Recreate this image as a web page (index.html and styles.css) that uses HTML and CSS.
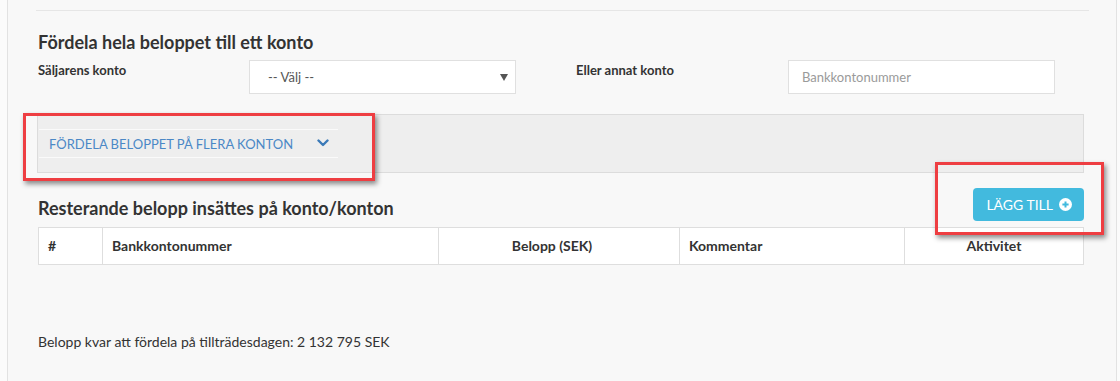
FILE: index.html
```html
<!DOCTYPE html>
<html lang="sv">
<head>
<meta charset="utf-8">
<title>Fördela belopp</title>
<link rel="stylesheet" href="styles.css">
</head>
<body>
<div class="panel">
  <div class="rule"></div>
  <h3 class="title">Fördela hela beloppet till ett konto</h3>
  <div class="form-row">
    <label class="lbl">Säljarens konto</label>
    <div class="select"><span>-- Välj --</span><span class="caret"></span></div>
    <div class="spacer"></div>
    <label class="lbl">Eller annat konto</label>
    <div class="input"><span class="ph">Bankkontonummer</span></div>
  </div>

  <div class="well">
    <div class="collapse-head">
      <span class="collapse-text">FÖRDELA BELOPPET PÅ FLERA KONTON</span>
      <svg class="chev" width="12" height="8" viewBox="0 0 12 8"><path d="M1.5 1.5 L6 6 L10.5 1.5" fill="none" stroke="#3b7ab8" stroke-width="2.4" stroke-linecap="round" stroke-linejoin="round"/></svg>
    </div>
    <div class="mark mark-well"></div>
  </div>

  <div class="split-row">
    <h3 class="title title2">Resterande belopp insättes på konto/konton</h3>
    <div class="btn-wrap">
      <button class="btn">LÄGG TILL <svg class="plus" width="13" height="13" viewBox="0 0 13 13"><circle cx="6.5" cy="6.5" r="6.5" fill="#fff"/><path d="M6.5 3.4 V9.6 M3.4 6.5 H9.6" stroke="#42bade" stroke-width="2"/></svg></button>
      <div class="mark mark-btn"></div>
    </div>
  </div>

  <table class="grid">
    <thead>
      <tr>
        <th class="c-num">#</th>
        <th class="c-acc">Bankkontonummer</th>
        <th class="c-amt">Belopp (SEK)</th>
        <th class="c-com">Kommentar</th>
        <th class="c-act">Aktivitet</th>
      </tr>
    </thead>
  </table>

  <p class="remain">Belopp kvar att fördela på tillträdesdagen: 2 132 795 SEK</p>
</div>
</body>
</html>
```

FILE: styles.css
```css
html, body {
  margin: 0;
  padding: 0;
}
body {
  background: #fbfbfb;
  font-family: Lato, "Open Sans", Arial, sans-serif;
  color: #333;
  font-size: 13px;
}
.panel {
  margin-left: 7px;
  width: 1046px;
  min-height: 400px;
  background: #f8f8f8;
  border-left: 1px solid #e2e2e2;
  border-right: 1px solid #e2e2e2;
  padding: 0 32px 0 30px;
}
.rule {
  height: 10px;
  border-bottom: 1px solid #e6e6e6;
  margin: 0 -5px 0 -2px;
}
.title {
  margin: 21px 0 0;
  font-size: 18px;
  line-height: 20px;
  font-weight: 700;
  color: #333;
}
.form-row {
  display: grid;
  grid-template-columns: 211px 267px 60px 212px 267px;
  margin-top: 8px;
  align-items: start;
}
.lbl {
  font-weight: 700;
  font-size: 13px;
  line-height: 18px;
  padding-top: 1px;
  color: #333;
}
.select, .input {
  box-sizing: border-box;
  height: 34px;
  background: #fff;
  border: 1px solid #e0e0e0;
  display: flex;
  align-items: center;
  font-size: 13px;
}
.select {
  padding: 0 7px 0 18px;
  color: #555;
  justify-content: space-between;
}
.caret {
  width: 0;
  height: 0;
  border-left: 4px solid transparent;
  border-right: 4px solid transparent;
  border-top: 7px solid #555;
}
.input {
  padding-left: 13px;
}
.ph {
  color: #9a9a9a;
}
.well {
  position: relative;
  margin: 20px 0 0 -1px;
  background: #eeeeee;
  border: 1px solid #dcdcdc;
  padding: 14px 0 14px 1px;
}
.collapse-head {
  width: 289px;
  height: 27px;
  border-top: 1px solid #fafafa;
  border-bottom: 1px solid #fafafa;
  padding-left: 10px;
  display: flex;
  align-items: center;
}
.collapse-text {
  color: #4b88c6;
  font-size: 13px;
}
.chev {
  margin-left: 24px;
  margin-top: -2px;
}
.mark {
  position: absolute;
  border: 3px solid #ee3e42;
  box-shadow: 2px 3px 5px rgba(0, 0, 0, 0.45);
  pointer-events: none;
}
.mark-well {
  left: -15px;
  top: -2px;
  width: 346px;
  height: 62px;
}
.split-row {
  display: flex;
  justify-content: space-between;
  align-items: flex-end;
  margin-top: 15px;
}
.title2 {
  margin: 0 0 3px;
}
.btn-wrap {
  position: relative;
}
.btn {
  display: flex;
  align-items: center;
  gap: 6px;
  height: 33px;
  padding: 0 12px 0 13px;
  background: #42bade;
  color: #fff;
  border: none;
  border-radius: 4px;
  font-family: Lato, "Open Sans", Arial, sans-serif;
  font-size: 14px;
}
.mark-btn {
  left: -38px;
  top: -26px;
  width: 163px;
  height: 67px;
}
.grid {
  margin-top: 6px;
  width: 1046px;
  border-collapse: collapse;
  background: #fff;
  table-layout: fixed;
}
.grid th {
  border: 1px solid #dedede;
  padding: 9px 9px;
  font-size: 14px;
  line-height: 18px;
  font-weight: 700;
  text-align: left;
  color: #333;
}
.grid .c-num { width: 45px; }
.grid .c-acc { width: 317px; }
.grid .c-amt { text-align: center; padding-right: 23px; width: 208px; }
.grid .c-com { width: 206px; }
.grid .c-act { text-align: center; }
.remain {
  margin: 68px 0 0;
  font-size: 14px;
  line-height: 18px;
  color: #333;
}
```
